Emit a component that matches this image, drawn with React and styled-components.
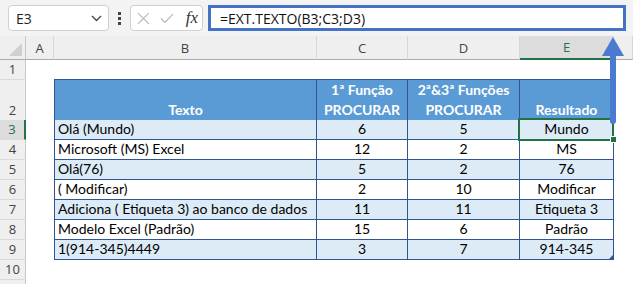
import React from 'react';
import styled, { createGlobalStyle, css } from 'styled-components';

const GREEN = '#217346';
const BORDER = '#2f5597';
const COLS = '26px 28px 263px 91px 112px 94px 1fr';

const GlobalStyle = createGlobalStyle`
  html, body { margin: 0; padding: 0; background: #fff; }
  body { font-family: "Open Sans", "Noto Sans", sans-serif; overflow: hidden; }
`;

/* barra de fórmulas */
const Toolbar = styled.div`
  display: flex;
  align-items: center;
  height: 36px;
  padding: 0 7px 0 8px;
  background: #f3f3f3;
  box-sizing: border-box;
`;

const NameBox = styled.div`
  width: 101px;
  height: 26px;
  box-sizing: border-box;
  border: 1px solid #d0d0d0;
  border-radius: 4px;
  background: #fff;
  display: flex;
  align-items: center;
  justify-content: space-between;
  padding: 0 6px 0 7px;
  font-size: 14px;
  color: #222;
`;

const Dots = styled.div`
  display: flex;
  flex-direction: column;
  gap: 2px;
  margin: 0 9px;
  span {
    width: 3px;
    height: 3px;
    background: #444;
  }
`;

const FxBox = styled.div`
  width: 73px;
  height: 26px;
  box-sizing: border-box;
  border: 1px solid #d0d0d0;
  border-radius: 4px;
  background: #fff;
  display: flex;
  align-items: center;
  gap: 10px;
  padding: 0 4px 0 6px;
  margin-right: 5px;
`;

const Fx = styled.span`
  font-family: "Liberation Serif", serif;
  font-style: italic;
  font-size: 17px;
  color: #333;
  margin-left: 2px;
`;

const FormulaBar = styled.div`
  flex: 1;
  height: 26px;
  box-sizing: border-box;
  border: 3px solid #4472c4;
  background: #fff;
  display: flex;
  align-items: center;
  padding-left: 9px;
  font-size: 14px;
  color: #111;
`;

/* planilha */
const Sheet = styled.div`
  position: relative;
`;

const Row = styled.div`
  display: grid;
  grid-template-columns: ${COLS};
  height: ${p => p.$h}px;
`;

const Corner = styled.div`
  position: relative;
  background: #efefef;
  border-right: 1px solid #c8c8c8;
  border-bottom: 1px solid #a9a9a9;
  &::after {
    content: '';
    position: absolute;
    right: 3px;
    bottom: 3px;
    border-style: solid;
    border-width: 0 0 13px 13px;
    border-color: transparent transparent #d0d0d0 transparent;
  }
`;

const ColHead = styled.div`
  box-sizing: border-box;
  display: flex;
  align-items: center;
  justify-content: center;
  font-size: 13px;
  color: #444;
  background: #efefef;
  border-right: 1px solid #d8d8d8;
  border-bottom: 1px solid #a9a9a9;
  ${p => p.$sel && css`
    background: #dcdcdc;
    color: ${GREEN};
    border-bottom: 2px solid ${GREEN};
  `}
`;

const RowHead = styled.div`
  box-sizing: border-box;
  display: flex;
  align-items: flex-end;
  justify-content: center;
  padding-bottom: 1px;
  font-size: 13px;
  line-height: 18px;
  color: #444;
  background: #efefef;
  border-right: 1px solid #c8c8c8;
  border-bottom: 1px solid #dadada;
  ${p => p.$sel && css`
    background: #dcdcdc;
    color: ${GREEN};
    border-right: 2px solid ${GREEN};
  `}
`;

const Cell = styled.div`
  position: relative;
  box-sizing: border-box;
  display: flex;
  align-items: flex-end;
  justify-content: ${p => (p.$left ? 'flex-start' : 'center')};
  padding: 0 3px 1px;
  font-family: Lato, "Liberation Sans", sans-serif;
  font-size: 14px;
  line-height: 18px;
  color: #000;
  white-space: nowrap;
  ${p => p.$cap && css`border-bottom: 1px solid ${BORDER};`}
  ${p => p.$table && css`
    border-right: 1px solid ${BORDER};
    border-bottom: 1px solid ${BORDER};
    background: ${p.$band ? '#ddebf7' : '#fff'};
  `}
  ${p => p.$lead && css`border-left: 1px solid ${BORDER};`}
  ${p => p.$head && css`
    background: #5b9bd5;
    color: #fff;
    font-weight: 700;
    flex-direction: column;
    justify-content: flex-end;
    align-items: center;
    line-height: 20px;
    padding-bottom: 0;
  `}
  ${p => p.$active && css`
    z-index: 2;
    &::after {
      content: '';
      position: absolute;
      top: -2px;
      left: -2px;
      right: -1px;
      bottom: -2px;
      border: 2px solid ${GREEN};
    }
  `}
  ${p => p.$grip && css`
    &::after {
      content: '';
      position: absolute;
      right: 0;
      bottom: 0;
      border-style: solid;
      border-width: 0 0 4px 4px;
      border-color: transparent transparent ${BORDER} transparent;
    }
  `}
`;

const Handle = styled.span`
  position: absolute;
  right: -4px;
  bottom: -4px;
  width: 5px;
  height: 5px;
  background: ${GREEN};
  border: 1px solid #fff;
  z-index: 3;
`;

const Arrow = styled.svg`
  position: absolute;
  left: 601px;
  top: 0;
  z-index: 5;
`;

const data = [
  ['Olá (Mundo)', 6, 5, 'Mundo'],
  ['Microsoft (MS) Excel', 12, 2, 'MS'],
  ['Olá(76)', 5, 2, '76'],
  ['( Modificar)', 2, 10, 'Modificar'],
  ['Adiciona ( Etiqueta 3) ao banco de dados', 11, 11, 'Etiqueta 3'],
  ['Modelo Excel (Padrão)', 15, 6, 'Padrão'],
  ['1(914-345)4449', 3, 7, '914-345'],
];

const Chevron = () => (
  <svg width="11" height="7" viewBox="0 0 11 7">
    <path d="M1 1 L5.5 5.5 L10 1" fill="none" stroke="#444" strokeWidth="1.3" />
  </svg>
);

const Cross = () => (
  <svg width="13" height="13" viewBox="0 0 13 13">
    <path d="M1 1 L12 12 M12 1 L1 12" stroke="#b8b8b8" strokeWidth="1.2" />
  </svg>
);

const Check = () => (
  <svg width="14" height="11" viewBox="0 0 14 11">
    <path d="M1 5.5 L5 9.5 L13 1" fill="none" stroke="#b8b8b8" strokeWidth="1.2" />
  </svg>
);

export default function App() {
  return (
    <>
      <GlobalStyle />
      <Toolbar>
        <NameBox>
          <span>E3</span>
          <Chevron />
        </NameBox>
        <Dots><span /><span /><span /></Dots>
        <FxBox>
          <Cross />
          <Check />
          <Fx>fx</Fx>
        </FxBox>
        <FormulaBar>=EXT.TEXTO(B3;C3;D3)</FormulaBar>
      </Toolbar>

      <Sheet>
        <Row $h={24}>
          <Corner />
          <ColHead>A</ColHead>
          <ColHead>B</ColHead>
          <ColHead>C</ColHead>
          <ColHead>D</ColHead>
          <ColHead $sel>E</ColHead>
          <ColHead />
        </Row>

        <Row $h={20}>
          <RowHead>1</RowHead>
          <Cell />
          <Cell $cap />
          <Cell $cap />
          <Cell $cap />
          <Cell $cap />
          <Cell />
        </Row>

        <Row $h={40}>
          <RowHead>2</RowHead>
          <Cell />
          <Cell $table $lead $head>Texto</Cell>
          <Cell $table $head><span>1ª Função</span><span>PROCURAR</span></Cell>
          <Cell $table $head><span>2ª&amp;3ª Funções</span><span>PROCURAR</span></Cell>
          <Cell $table $head>Resultado</Cell>
          <Cell />
        </Row>

        {data.map(([text, c, d, res], i) => {
          const band = i % 2 === 0;
          const first = i === 0;
          const last = i === data.length - 1;
          return (
            <Row $h={20} key={text}>
              <RowHead $sel={first}>{i + 3}</RowHead>
              <Cell />
              <Cell $table $lead $band={band} $left>{text}</Cell>
              <Cell $table $band={band}>{c}</Cell>
              <Cell $table $band={band}>{d}</Cell>
              <Cell $table $band={band} $active={first} $grip={last}>
                {res}
                {first && <Handle />}
              </Cell>
              <Cell />
            </Row>
          );
        })}

        <Row $h={20}>
          <RowHead>10</RowHead>
          <Cell />
          <Cell />
          <Cell />
          <Cell />
          <Cell />
          <Cell />
        </Row>
        <Row $h={20}>
          <RowHead />
        </Row>

        <Arrow width="24" height="89" viewBox="0 0 24 89">
          <path d="M12 1 L23 20 L1 20 Z" fill="#4a7bd0" />
          <rect x="9" y="18" width="6" height="70" rx="3" fill="#4a7bd0" />
        </Arrow>
      </Sheet>
    </>
  );
}
